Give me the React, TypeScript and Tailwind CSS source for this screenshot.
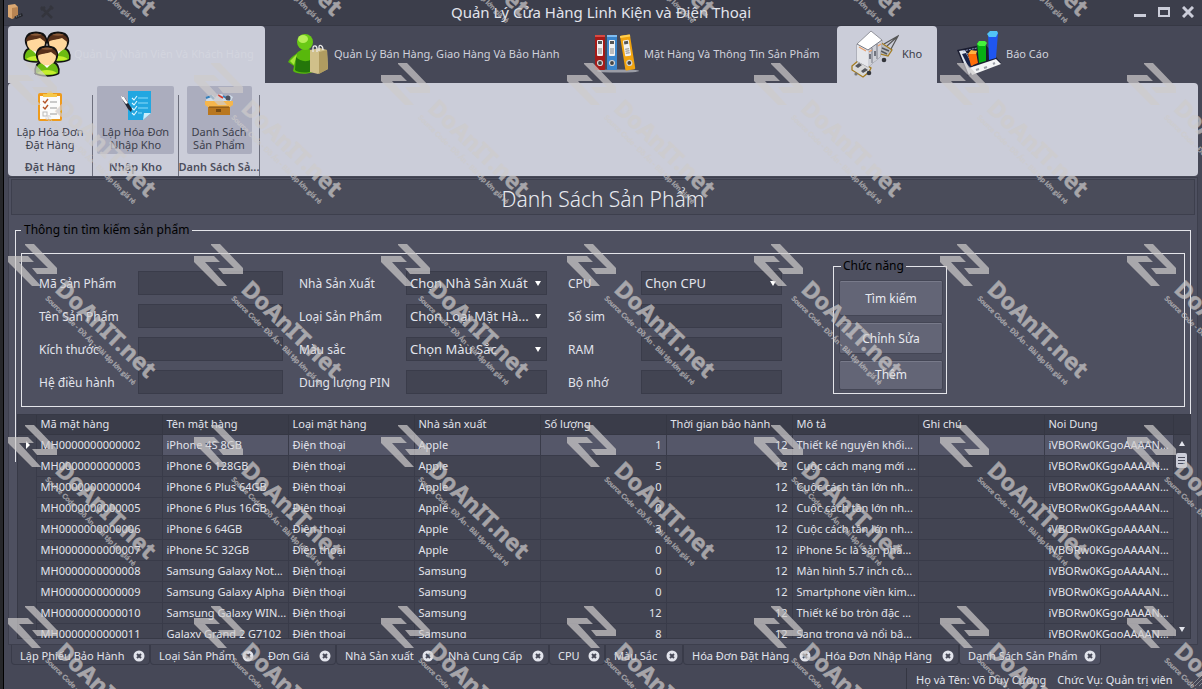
import type { ReactNode } from "react";

const MENU_TABS: { label: string; cls: string; icon: ReactNode; textCls: string }[] = [
  { label: "Quản Lý Nhân Viên Và Khách Hàng", cls: "w-[257px] pl-[15px] gap-0.5 bg-[#cbcdd9] rounded-t-sm", icon: <PeopleIcon />, textCls: "text-[#d3d5df]" },
  { label: "Quản Lý Bán Hàng, Giao Hàng Và Bảo Hành", cls: "w-[306px] pl-[23px] gap-0.5", icon: <ShopperIcon />, textCls: "text-[#d0d2dc]" },
  { label: "Mặt Hàng Và Thông Tin Sản Phẩm", cls: "w-[266px] pl-[23px] gap-1", icon: <BindersIcon />, textCls: "text-[#d0d2dc]" },
  { label: "Kho", cls: "w-[100px] pl-[14px] gap-[3px] bg-[#cbcdd9] rounded-t-sm", icon: <WagonIcon />, textCls: "text-[#3c3e4b]" },
  { label: "Báo Cáo", cls: "w-[120px] pl-5 gap-1", icon: <ReportIcon />, textCls: "text-[#d0d2dc]" },
];

const ROWS: string[][] = [
  ["MH0000000000002", "iPhone 4S 8GB", "Apple", "1", "Thiết kế nguyên khối..."],
  ["MH0000000000003", "iPhone 6 128GB", "Apple", "5", "Cuộc cách mạng mới ..."],
  ["MH0000000000004", "iPhone 6 Plus 64GB", "Apple", "0", "Cuộc cách tân lớn nh..."],
  ["MH0000000000005", "iPhone 6 Plus 16GB", "Apple", "0", "Cuộc cách tân lớn nh..."],
  ["MH0000000000006", "iPhone 6 64GB", "Apple", "3", "Cuộc cách tân lớn nh..."],
  ["MH0000000000007", "iPhone 5C 32GB", "Apple", "0", "iPhone 5c là sản phẩ..."],
  ["MH0000000000008", "Samsung Galaxy Not...", "Samsung", "0", "Màn hình 5.7 inch cô..."],
  ["MH0000000000009", "Samsung Galaxy Alpha", "Samsung", "0", "Smartphone viền kim..."],
  ["MH0000000000010", "Samsung Galaxy WIN...", "Samsung", "12", "Thiết kế bo tròn đặc ..."],
  ["MH0000000000011", "Galaxy Grand 2 G7102", "Samsung", "8", "Sang trọng và nổi bậ..."],
];

const HEADERS = ["Mã mặt hàng", "Tên mặt hàng", "Loại mặt hàng", "Nhà sản xuất", "Số lượng", "Thời gian bảo hành", "Mô tả", "Ghi chú", "Noi Dung"];

const DOC_TABS = [
  { label: "Lập Phiếu Bảo Hành", cls: "w-[139px]" },
  { label: "Loại Sản Phẩm", cls: "w-[109px]" },
  { label: "Đơn Giá", cls: "w-[77px]" },
  { label: "Nhà Sản xuất", cls: "w-[103px]" },
  { label: "Nhà Cung Cấp", cls: "w-[110px]" },
  { label: "CPU", cls: "w-[56px]" },
  { label: "Màu Sắc", cls: "w-[78px]" },
  { label: "Hóa Đơn Đặt Hàng", cls: "w-[133px]" },
  { label: "Hóa Đơn Nhập Hàng", cls: "w-[143px]" },
  { label: "Danh Sách Sản Phẩm", cls: "w-[142px] bg-[#4f5162]" },
];

function PeopleIcon() {
  const person = (x: number, y: number) => (
    <g transform={`translate(${x} ${y})`}>
      <path d="M2 28C1 22 4 18 7 18C1 11 2 2 13 2S25 11 19 18C22 18 25 22 24 28C19 31 7 31 2 28Z" fill="#111" stroke="#111" strokeWidth="3" strokeLinejoin="round" />
      <path d="M2 28C1 22 5 18 8 18H18C21 18 25 22 24 28C19 31 7 31 2 28Z" fill="#6dbb12" />
      <path d="M3 28C8 24 18 24 23 28C18 30 8 30 3 28Z" fill="#c5ee2c" />
      <path d="M8 18L13 23L18 18Z" fill="#fff" />
      <ellipse cx="13" cy="12" rx="9" ry="8.5" fill="#ffd79c" />
      <path d="M3 11C2 0 24 0 23 11C20 10 19 8 17 7C13 9 7 8 3 11Z" fill="#57301a" />
      <path d="M7 4C10 2 16 2 19 4C15 5 11 5 7 4Z" fill="#8a5a38" />
    </g>
  );
  return (
    <svg width="49" height="47" viewBox="0 0 49 47" aria-hidden="true">
      {person(0, 1)}
      {person(22, 1)}
      {person(11, 15)}
    </svg>
  );
}

function ShopperIcon() {
  return (
    <svg width="44" height="44" viewBox="0 0 44 44" aria-hidden="true">
      <path d="M8 22C12 17 20 15 24 19L25 40C18 43 8 42 5 39L6 34L0 30C2 26 5 24 8 22Z" fill="#58b80c" />
      <path d="M8 25C12 29 18 31 24 27V39C17 42 9 40 7 38Z" fill="#24760a" />
      <path d="M2 29L9 22L6 33Z" fill="#a7e63a" />
      <circle cx="17" cy="10" r="8" fill="#69c915" />
      <ellipse cx="15" cy="7" rx="5" ry="4" fill="#b5ee58" />
      <path d="M22 18L32 16L39 18L40 37L30 42L22 40Z" fill="#d0c08a" />
      <path d="M31 20L39 18L40 37L31 42Z" fill="#b09c60" />
      <path d="M25 20V16C25 13 29 13 29 17V20M31 19V15C31 12 35 13 35 18" fill="none" stroke="#e9e9e9" strokeWidth="1.3" />
    </svg>
  );
}

function BindersIcon() {
  const binder = (color: string, edge: string) => (
    <g>
      <rect width="10" height="35" rx="1" fill={color} />
      <path d="M0 1H10" stroke={edge} strokeWidth="2" />
      <rect x="2" y="5" width="6" height="16" rx="1" fill="#f1f1f1" />
      <rect x="3" y="6" width="4" height="3" fill="#555" />
      <path d="M3 16H7M3 18H7M3 14H7" stroke="#888" strokeWidth="1" />
      <circle cx="5" cy="28" r="2.5" fill="#444" stroke="#d5d5d5" strokeWidth="1.2" />
    </g>
  );
  return (
    <svg width="46" height="40" viewBox="0 0 46 40" aria-hidden="true">
      <ellipse cx="24" cy="37" rx="21" ry="1.6" fill="#9a9ca6" />
      <g transform="translate(1 1)">{binder("#a51a18", "#d84a42")}</g>
      <g transform="translate(13 1)">{binder("#3b86cc", "#81bdf0")}</g>
      <g transform="translate(26 2) rotate(-9)">{binder("#f0a30f", "#ffd052")}</g>
    </svg>
  );
}

function WagonIcon() {
  return (
    <svg width="48" height="48" viewBox="0 0 48 48" aria-hidden="true">
      <path d="M33 14L47 6L40 19M36 16L46 7" fill="none" stroke="#555" strokeWidth="1.2" />
      <path d="M29 12L41 20L37 26L26 23Z" fill="#b9bbc0" stroke="#a47c20" strokeWidth="1.2" />
      <path d="M31 18L38 21M30 21L36 24" stroke="#55575d" strokeWidth="1.4" />
      <path d="M1 36L8 30L20 38L18 42L12 47L1 40Z" fill="#d9d9d9" stroke="#a47c20" strokeWidth="1.3" />
      <path d="M4 36L8 33L11 35L7 38ZM10 41L14 38L17 40L12 43Z" fill="#55575d" />
      <path d="M6 14L20 1L31 10L29 27L17 37L6 31Z" fill="#fff" stroke="#92949c" />
      <path d="M6 14L17 20L17 37L6 31Z" fill="#e5e6ea" />
      <path d="M17 20L31 10L29 27L17 37Z" fill="#cfd1d8" />
      <path d="M6 14L17 20L31 10M21 18V33M26 14V29" fill="none" stroke="#777983" strokeWidth="1" />
      <path d="M8 17L15 21M18 22L21 20M27 16L30 14" stroke="#e9a06d" strokeWidth="1.3" />
      <path d="M19 24V29M24 21V26" stroke="#353744" strokeWidth="1.2" />
      <circle cx="33" cy="30" r="2.3" fill="#34363c" />
      <circle cx="18" cy="43" r="2.3" fill="#34363c" />
      <circle cx="5" cy="44" r="1.6" fill="#777" />
    </svg>
  );
}

function ReportIcon() {
  return (
    <svg width="45" height="48" viewBox="0 0 45 48" aria-hidden="true">
      <path d="M0 20L28 14L44 33L11 46Z" fill="#1a1c30" />
      <path d="M2 21L8 20L17 38L12 45Z" fill="#dfe5ee" />
      <path d="M5 24L9 23L17 38L13 40Z" fill="#182348" />
      <path d="M12 38L39 29L44 34L15 45Z" fill="#f4f5f6" />
      <path d="M6 21L20 18M9 24L20 21" stroke="#8d98bf" strokeDasharray="2 1" />
      <path d="M11 24L19 22L21 33L14 36Z" fill="#ff6d08" />
      <path d="M11 24L14 20L20 21L19 24Z" fill="#ffb441" />
      <path d="M20 13L29 13L29 31L22 33Z" fill="#07ae15" />
      <path d="M20 14L22 11H28L30 13L28 16H22Z" fill="#45f23c" />
      <path d="M31 3L41 3L39 28L32 30Z" fill="#1f56f0" />
      <path d="M30 4L33 1H40L41 3L39 7H32Z" fill="#52c3f5" />
      <path d="M19 40L22 39M27 38L30 37M36 34L38 33" stroke="#9b9fa7" strokeWidth="2" />
    </svg>
  );
}

function ClipboardIcon() {
  return (
    <svg width="26" height="32" viewBox="0 0 26 32" aria-hidden="true">
      <rect x="1" y="3" width="24" height="28" rx="2" fill="#ee9b1c" />
      <path d="M3 6H23V29H3Z" fill="#fbfbfb" />
      <path d="M6 7V4H10C10 0 16 0 16 4H20V7Z" fill="#f5c84b" />
      <path d="M6 11L8 13L11 9M6 17L8 19L11 15" fill="none" stroke="#b6562a" strokeWidth="1.4" />
      <rect x="6" y="22" width="4" height="4" fill="none" stroke="#bbb" />
      <path d="M13 12H20M13 18H20M13 24H20" stroke="#bbb" strokeWidth="1.4" />
    </svg>
  );
}

function NotePenIcon() {
  return (
    <svg width="32" height="32" viewBox="0 0 32 32" aria-hidden="true">
      <path d="M8 1H31V23L23 30H8Z" fill="#22a7e1" />
      <path d="M23 30L24 23H31Z" fill="#c9edfb" />
      <path d="M12 8L14 10L17 6M12 13L14 15L17 11M12 18L14 20L17 16M12 23L14 25L17 21" fill="none" stroke="#e6f8ff" strokeWidth="1.1" />
      <path d="M18 8H28M18 13H28M18 18H28M18 23H22" stroke="#8bdcf9" strokeWidth="1.2" />
      <path d="M2 6L5 8L12 19L11 22L8 19L2 9Z" fill="#222633" />
      <path d="M1 6L4 7L8 13L6 14L2 9Z" fill="#fff" />
    </svg>
  );
}

function CrateIcon() {
  return (
    <svg width="30" height="32" viewBox="0 0 30 32" aria-hidden="true">
      <path d="M2 11L3 6L9 5L11 8L14 4H18L21 8L26 5L29 7L27 11Z" fill="#cfdce9" />
      <path d="M2 8L7 6L10 9M19 6L26 10" fill="none" stroke="#347fbb" strokeWidth="2" />
      <path d="M14 5L19 8" stroke="#d63c2f" strokeWidth="2" />
      <circle cx="24" cy="8" r="2.5" fill="#4e5360" />
      <path d="M1 11H29V15L26 17V25H4V17L1 15Z" fill="#f5b64d" />
      <path d="M4 17H26V25H4Z" fill="#b9771f" />
      <path d="M5 17H25" stroke="#774b14" />
      <rect x="12" y="19" width="5" height="3" fill="#774b14" />
    </svg>
  );
}

function Watermark() {
  const cols = [8, 194, 381, 567, 754, 940, 1127];
  const rows = [-118, 63, 244, 425, 606];
  return (
    <div className="pointer-events-none absolute inset-0 overflow-hidden" aria-hidden="true">
      <svg width="100%" height="100%" className="opacity-70" fill="#cfcccc">
        {rows.flatMap((y) =>
          cols.map((x) => (
            <g key={`${x}-${y}`} transform={`translate(${x} ${y})`}>
              <path d="M17 0H26L49 24V30H29L24 24H40L17 1Z" />
              <path d="M0 12H20L26 18H11L33 42H24L0 18Z" />
              <text transform="translate(46 47) rotate(43.5)" fontFamily="'Noto Sans', sans-serif" fontWeight="700" fontSize="23" stroke="#cfcccc" strokeWidth="0.5">DoAnIT.net</text>
              <text transform="translate(37 55) rotate(44.5)" fontFamily="Lato, sans-serif" fontWeight="700" fontSize="7" stroke="#cfcccc" strokeWidth="0.2">Source Code - Đồ Án - Bài tập lớn giá rẻ</text>
            </g>
          )),
        )}
      </svg>
    </div>
  );
}

const FIELD = "h-6 w-full appearance-none rounded-none border border-[#3a3c4a] bg-[#424452] px-[3px] text-[13px] leading-5 text-[#e2e4ec] outline-none";

function TextField({ id }: { id: string }) {
  return <input id={id} type="text" className={FIELD} />;
}

function SelectField({ id, value }: { id: string; value: string }) {
  return (
    <div className="relative">
      <select id={id} className={FIELD}>
        <option>{value}</option>
      </select>
      <svg width="6" height="5" viewBox="0 0 6 5" className="pointer-events-none absolute top-2.5 right-1.5" aria-hidden="true">
        <path d="M0 0H6L3 5Z" fill="#fff" />
      </svg>
    </div>
  );
}

function Label({ id, text, cls = "" }: { id: string; text: string; cls?: string }) {
  return <label htmlFor={id} className={`pt-0.5 whitespace-nowrap ${cls}`}>{text}</label>;
}

function SearchForm() {
  return (
    <form className="flex border border-[#e4e5ea] pb-3 pl-[17px]" onSubmit={(e) => e.preventDefault()}>
      <div className="mt-[17px] grid grid-cols-[99px_145px_123px_141px_94px_141px] content-start items-center gap-y-[9px] text-[12px] leading-5 text-[#e2e4ec]">
        <Label id="code" text="Mã Sản Phẩm" />
        <TextField id="code" />
        <Label id="maker" text="Nhà Sản Xuất" cls="pl-4" />
        <SelectField id="maker" value="Chọn Nhà Sản Xuất" />
        <Label id="cpu" text="CPU" cls="pl-[21px]" />
        <SelectField id="cpu" value="Chọn CPU" />
        <Label id="name" text="Tên Sản Phẩm" />
        <TextField id="name" />
        <Label id="kind" text="Loại Sản Phẩm" cls="pl-4" />
        <SelectField id="kind" value="Chọn Loại Mặt Hà..." />
        <Label id="sims" text="Số sim" cls="pl-[21px]" />
        <TextField id="sims" />
        <Label id="size" text="Kích thước" />
        <TextField id="size" />
        <Label id="color" text="Màu sắc" cls="pl-4" />
        <SelectField id="color" value="Chọn Màu Sắc" />
        <Label id="ram" text="RAM" cls="pl-[21px]" />
        <TextField id="ram" />
        <Label id="os" text="Hệ điều hành" />
        <TextField id="os" />
        <Label id="battery" text="Dung lượng PIN" cls="pl-4" />
        <TextField id="battery" />
        <Label id="storage" text="Bộ nhớ" cls="pl-[21px]" />
        <TextField id="storage" />
      </div>
      <fieldset className="mt-1 ml-[51px] flex w-[114px] flex-col border border-[#e4e5ea] pr-[3px] pb-[3px] pl-[5px] text-[12px] text-[#e8eaf0]">
        <legend className="ml-0.5 px-0.5 text-[12px] leading-4 text-black">Chức năng</legend>
        <div className="mt-1.5 flex flex-col gap-1.5">
          <button className="h-9 rounded-xs border border-[#444655] bg-[#636576] pt-0.5 shadow-[inset_0_1px_0_#787a8a]">Tìm kiếm</button>
          <button className="h-8 rounded-xs border border-[#444655] bg-[#636576] pt-0.5 shadow-[inset_0_1px_0_#787a8a]">Chỉnh Sửa</button>
          <button className="h-[30px] rounded-xs border border-[#444655] bg-[#636576] shadow-[inset_0_1px_0_#787a8a]">Thêm</button>
        </div>
      </fieldset>
    </form>
  );
}

function ProductTable() {
  return (
    <div className="flex min-h-0 flex-1 pr-1 pl-1">
      <div className="h-12 w-0.5 border-l border-[#e4e5ea]" />
      <div className="relative min-w-0 flex-1 overflow-hidden border border-[#373946] bg-[#424452]">
        <table className="w-full table-fixed border-collapse text-[11px] leading-4 text-[#e2e4ec]">
          <colgroup>
            <col className="w-[18px]" />
            {HEADERS.slice(0, 8).map((h) => <col key={h} className="w-[126px]" />)}
            <col />
            <col className="w-[17px]" />
          </colgroup>
          <thead>
            <tr className="h-[19px] bg-[#3a3c49]">
              <th className="border-r border-b border-[#353743]" />
              {HEADERS.map((h) => (
                <th key={h} className="border-r border-b border-[#353743] px-1 text-left font-normal whitespace-nowrap">{h}</th>
              ))}
              <th className="border-b border-[#353743]" />
            </tr>
          </thead>
          <tbody>
            {ROWS.map(([code, name, maker, qty, desc], i) => {
              const base = "overflow-hidden border-r border-b border-[#393b49] px-1 py-0 whitespace-nowrap";
              const cell = i === 0 ? `${base} bg-[#555769]` : base;
              return (
                <tr key={code} className="h-[21px]">
                  <td className="border-r border-[#393b49] p-0">
                    {i === 0 && (
                      <svg width="4" height="8" viewBox="0 0 4 8" className="ml-2" aria-hidden="true">
                        <path d="M0 0L4 4L0 8Z" fill="#fff" />
                      </svg>
                    )}
                  </td>
                  <td className={base}>{code}</td>
                  <td className={cell}>{name}</td>
                  <td className={cell}>Điện thoại</td>
                  <td className={cell}>{maker}</td>
                  <td className={`${cell} text-right`}>{qty}</td>
                  <td className={`${cell} text-right`}>12</td>
                  <td className={cell}>{desc}</td>
                  <td className={cell} />
                  <td className={cell}>iVBORw0KGgoAAAAN...</td>
                  <td />
                </tr>
              );
            })}
          </tbody>
        </table>
        <div className="absolute top-5 right-0 bottom-0 flex w-[17px] flex-col items-center py-1.5">
          <svg width="6" height="5" viewBox="0 0 6 5" aria-hidden="true"><path d="M0 5H6L3 0Z" fill="#e2e4ec" /></svg>
          <div className="mt-[7px] flex h-[15px] w-[11px] flex-col justify-center gap-0.5 rounded-xs bg-[#cbcdd9] px-0.5">
            <span className="h-px bg-[#4b4d5c]" />
            <span className="h-px bg-[#4b4d5c]" />
            <span className="h-px bg-[#4b4d5c]" />
          </div>
          <svg width="6" height="5" viewBox="0 0 6 5" className="mt-auto" aria-hidden="true"><path d="M0 0H6L3 5Z" fill="#e2e4ec" /></svg>
        </div>
      </div>
    </div>
  );
}

function RibbonGroup({ cls, btnCls, icon, lines, caption }: { cls: string; btnCls: string; icon: ReactNode; lines: string[]; caption: string }) {
  return (
    <div className={`flex flex-col items-center ${cls}`}>
      <button className={`mt-[3px] flex h-[68px] flex-col items-center rounded-xs pt-1 text-[11px] leading-[13px] text-[#3c3e4b] ${btnCls}`}>
        {icon}
        <span className="mt-[3px] whitespace-nowrap">{lines[0]}</span>
        <span className="whitespace-nowrap">{lines[1]}</span>
      </button>
      <div className="mt-[5px] text-[11px] leading-4 font-semibold whitespace-nowrap text-[#4b4d5c]">{caption}</div>
    </div>
  );
}

export default function App() {
  return (
    <div className="relative flex h-screen min-h-[560px] overflow-hidden bg-[#3f4150] font-['Noto_Sans','Open_Sans',sans-serif]">
      <div className="w-1 shrink-0 border-r border-black bg-[#26272a]" />
      <div className="flex min-w-0 flex-1 flex-col bg-[#464857] pl-1">
        <header className="-ml-1 flex h-[26px] shrink-0 items-center justify-between border-b border-[#363844] bg-[#3c3e4b] pr-2 pb-0.5 pl-1">
          <div className="flex w-24 items-center gap-4">
            <svg width="16" height="16" viewBox="0 0 16 16" aria-hidden="true">
              <path d="M0 1L7 0L10 3V12L4 15L0 13Z" fill="#dba872" />
              <path d="M4 4L10 3V12L4 15Z" fill="#b88452" />
              <path d="M6 13L14 9L15 12L8 15Z" fill="#25262c" />
              <path d="M8 13L13 11" stroke="#8796a0" strokeDasharray="1 1" />
            </svg>
            <svg width="14" height="14" viewBox="0 0 14 14" aria-hidden="true">
              <path d="M1 2L12 13M12 2L2 12M1 5L5 2M10 1L13 4" stroke="#34353d" strokeWidth="2.5" />
            </svg>
          </div>
          <h1 className="text-[15px] leading-5 whitespace-nowrap text-[#e2e4ec]">Quản Lý Cửa Hàng Linh Kiện và Điện Thoại</h1>
          <div className="flex w-24 justify-end gap-3">
            <button aria-label="Thu nhỏ">
              <svg width="12" height="12" viewBox="0 0 12 12"><path d="M0 9.5H12" stroke="#cbcdd9" strokeWidth="3" /></svg>
            </button>
            <button aria-label="Phóng to">
              <svg width="12" height="12" viewBox="0 0 12 12"><path d="M1 2H11V10H1Z M1 3H11" fill="none" stroke="#cbcdd9" strokeWidth="2" /></svg>
            </button>
            <button aria-label="Đóng">
              <svg width="12" height="12" viewBox="0 0 12 12"><path d="M1 1L11 11M11 1L1 11" stroke="#cbcdd9" strokeWidth="3" /></svg>
            </button>
          </div>
        </header>

        <nav className="flex h-[57px] shrink-0 text-[11px] leading-4">
          {MENU_TABS.map((t) => (
            <button key={t.label} className={`flex shrink-0 items-center pb-0.5 whitespace-nowrap ${t.cls}`}>
              {t.icon}
              <span className={t.textCls}>{t.label}</span>
            </button>
          ))}
        </nav>

        <div className="mr-1 flex h-[93px] shrink-0 rounded-sm bg-[#cbcdd9]">
          <RibbonGroup cls="w-[84px]" btnCls="w-[77px]" icon={<ClipboardIcon />} lines={["Lập Hóa Đơn", "Đặt Hàng"]} caption="Đặt Hàng" />
          <div className="mt-3 w-px bg-[#6d6f7d]" />
          <RibbonGroup cls="w-[85px]" btnCls="w-[77px] bg-[#abadbe]" icon={<NotePenIcon />} lines={["Lập Hóa Đơn", "Nhập Kho"]} caption="Nhập Kho" />
          <div className="mt-3 w-px bg-[#6d6f7d]" />
          <RibbonGroup cls="w-[80px]" btnCls="w-[65px] bg-[#abadbe]" icon={<CrateIcon />} lines={["Danh Sách", "Sản Phẩm"]} caption="Danh Sách Sả..." />
          <div className="mt-3 w-px bg-[#6d6f7d]" />
        </div>

        <main className="mt-px mr-1 flex min-h-0 flex-1 flex-col border border-[#3d3f4d] bg-[#4e5060] px-0.5 pb-[5px]">
          <div className="mt-px flex h-9 shrink-0 items-center justify-center border border-[#3d3f4d] bg-[#4a4c5a] pt-1">
            <h2 className="text-[21px] leading-7 font-light text-[#e8eaf0]">Danh Sách Sản Phẩm</h2>
          </div>
          <fieldset className="mx-1 mt-[7px] shrink-0 border border-b-0 border-[#e4e5ea] px-[5px] pb-[7px]">
            <legend className="px-[3px] text-[12px] leading-4 text-black">Thông tin tìm kiếm sản phẩm</legend>
            <div className="mt-[15px]">
              <SearchForm />
            </div>
          </fieldset>
          <ProductTable />
        </main>

        <div className="flex h-[21px] shrink-0 pl-1 text-[11px] leading-4 text-[#e2e4ec]">
          {DOC_TABS.map((t) => (
            <div key={t.label} className={`mr-px -ml-px flex h-5 shrink-0 items-center justify-between rounded-b-sm border border-t-0 border-[#393b49] pt-0.5 pr-1 pl-2 whitespace-nowrap ${t.cls}`}>
              <button>{t.label}</button>
              <button aria-label={`Đóng ${t.label}`}>
                <svg width="12" height="12" viewBox="0 0 12 12">
                  <circle cx="6" cy="6" r="5.5" fill="#e2e4ec" />
                  <path d="M4 4L8 8M8 4L4 8" stroke="#464857" strokeWidth="2" />
                </svg>
              </button>
            </div>
          ))}
        </div>
        <footer className="mt-0.5 flex h-[21px] shrink-0 justify-end text-[11px] leading-6 text-[#e2e4ec]">
          <div className="flex w-[296px] items-center gap-[11px] border-l border-[#343642] pt-0.5 pl-[9px] whitespace-nowrap">
            <span>Họ và Tên: Võ Duy Cường</span>
            <span>Chức Vụ: Quản trị viên</span>
            <svg width="12" height="12" viewBox="0 0 12 12" className="ml-auto" aria-hidden="true">
              <path d="M1 12L12 1M5 12L12 5M9 12L12 9" stroke="#85878f" />
            </svg>
          </div>
        </footer>
      </div>
      <Watermark />
    </div>
  );
}
